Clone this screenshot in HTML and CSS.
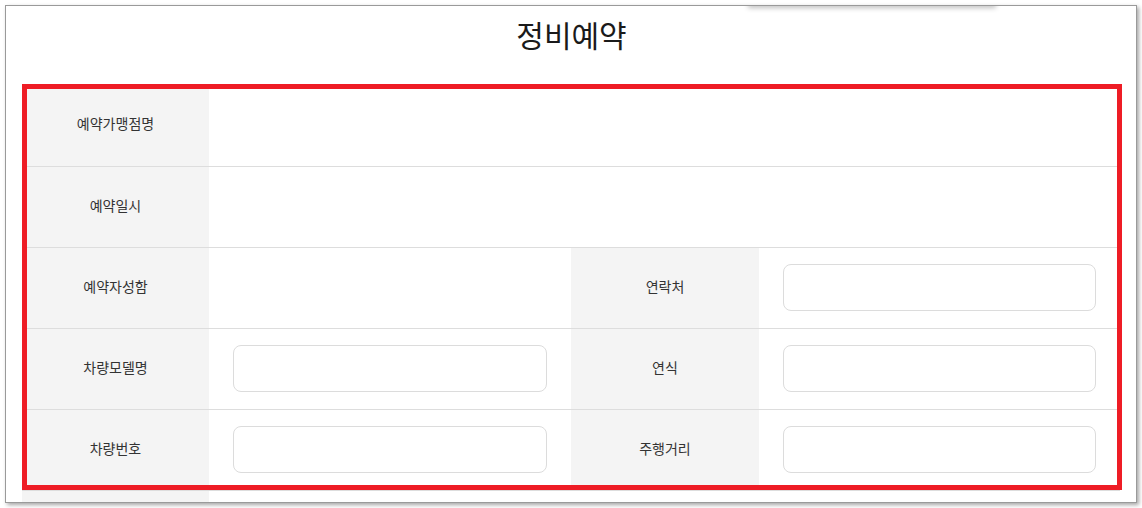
FILE: index.html
```html
<!DOCTYPE html>
<html lang="ko">
<head>
    <meta charset="UTF-8">
    <meta name="viewport" content="width=device-width, initial-scale=1.0">
    <title>정비예약</title>
    <link rel="stylesheet" href="styles.css">
</head>
<body>
    <div class="window">
        <div class="menu-shadow"></div>
        <h1 class="page-title">정비예약</h1>
        <table class="reserve-table">
            <colgroup>
                <col class="col-label">
                <col class="col-value">
                <col class="col-label2">
                <col class="col-value2">
            </colgroup>
            <tr>
                <th>예약가맹점명</th>
                <td colspan="3"></td>
            </tr>
            <tr>
                <th>예약일시</th>
                <td colspan="3"></td>
            </tr>
            <tr>
                <th>예약자성함</th>
                <td></td>
                <th>연락처</th>
                <td><input type="text" class="field"></td>
            </tr>
            <tr>
                <th>차량모델명</th>
                <td><input type="text" class="field"></td>
                <th>연식</th>
                <td><input type="text" class="field"></td>
            </tr>
            <tr>
                <th>차량번호</th>
                <td><input type="text" class="field"></td>
                <th>주행거리</th>
                <td><input type="text" class="field"></td>
            </tr>
            <tr>
                <th></th>
                <td colspan="3"></td>
            </tr>
        </table>
        <!-- highlight box over the form -->
        <div class="highlight"></div>
    </div>
</body>
</html>
```

FILE: styles.css
```css
/* page frame */
body {
    margin: 0;
    background: #fff;
    font-family: "Noto Sans CJK KR", "Noto Sans", sans-serif;
    color: #333;
}
.window {
    position: relative;
    margin: 5px;
    width: 1099px;
    height: 487px;
    border: 1px solid #9a9a9a;
    box-shadow: 2px 2px 4px rgba(0, 0, 0, 0.35);
    background: #fff;
    overflow: hidden;
    padding: 9px 15px 0 16px;
}
.menu-shadow {
    position: absolute;
    left: 742px;
    top: -6px;
    width: 248px;
    height: 6px;
    box-shadow: 0 2px 5px rgba(0, 0, 0, 0.25);
}
.page-title {
    margin: 0 0 30px;
    height: 40px;
    line-height: 38px;
    font-size: 30px;
    font-weight: 400;
    color: #1a1a1a;
    text-align: center;
}

/* form table */
.reserve-table {
    width: 1098px;
    table-layout: fixed;
    border-collapse: collapse;
}
.col-label {
    width: 187px;
}
.col-value {
    width: 362px;
}
.col-label2 {
    width: 188px;
}
.col-value2 {
    width: 361px;
}
.reserve-table th,
.reserve-table td {
    height: 81px;
    padding: 0 24px;
    border-bottom: 1px solid #dddddd;
    box-sizing: border-box;
}
.reserve-table th {
    background: #f4f4f4;
    font-size: 14px;
    font-weight: 400;
    color: #333;
    text-align: center;
    padding: 0 0 4px;
}
.field {
    display: block;
    width: 100%;
    height: 47px;
    border: 1px solid #dcdcdc;
    border-radius: 8px;
    box-sizing: border-box;
    padding: 0 14px;
    font-family: inherit;
    font-size: 14px;
    outline: none;
}

.highlight {
    position: absolute;
    left: 16px;
    top: 78px;
    width: 1100px;
    height: 406px;
    border: 5px solid #ee1c25;
    box-sizing: border-box;
    pointer-events: none;
}
```
